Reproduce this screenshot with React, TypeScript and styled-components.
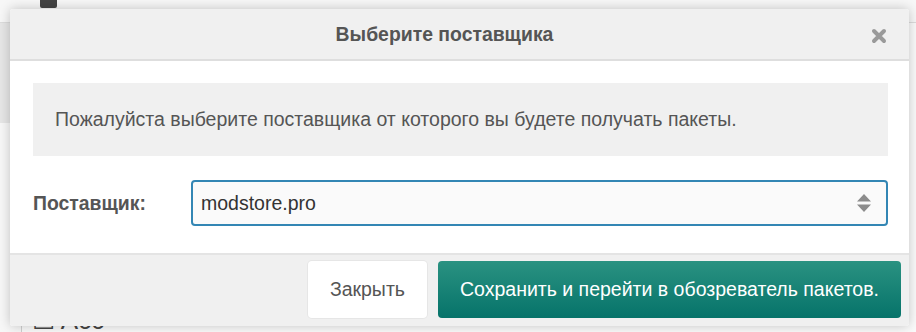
import React from 'react';
import styled, { createGlobalStyle } from 'styled-components';

const GlobalStyle = createGlobalStyle`
  html, body {
    margin: 0;
    padding: 0;
    background: #f4f4f4;
    font-family: "Liberation Sans", Arial, sans-serif;
  }
`;

const Page = styled.div`
  position: relative;
  width: 916px;
  height: 332px;
  overflow: hidden;
  background: #f4f4f4;
`;

const Backdrop = styled.div`
  display: grid;
  grid-template-columns: 22px 1fr;
  grid-template-rows: 23px 1fr;
  height: 100%;
`;

const TopBar = styled.div`
  grid-column: 1 / 3;
  background: #f7f7f7;
  border-bottom: 1px solid #dcdcdc;
  display: flex;
  align-items: flex-start;
  padding-left: 40px;
  gap: 44px;
`;

const TopIcon = styled.div`
  width: 17px;
  height: 8px;
  background: #444;
  border-radius: 0 0 2px 2px;
`;

const SideStrip = styled.div`
  background: linear-gradient(#e6e6e6 0, #e6e6e6 100px, #f7f7f7 100px);
  border-right: 1px solid #d0d0d0;
`;

const Content = styled.div`
  background: #fafafa;
  display: flex;
  flex-direction: column;
  justify-content: flex-end;
  padding: 0 0 2px 10px;
`;

const BgLabel = styled.div`
  font-size: 26px;
  color: #444;
  line-height: 20px;
`;

const Window = styled.div`
  position: absolute;
  left: 10px;
  top: 9px;
  width: 899px;
  height: 317px;
  display: flex;
  flex-direction: column;
  background: #fff;
  border-radius: 3px;
  box-shadow: 0 0 12px rgba(0, 0, 0, 0.22);
  overflow: hidden;
`;

const Header = styled.div`
  height: 50px;
  flex: none;
  background: #f0f0f0;
  border-bottom: 2px solid #dedede;
  display: flex;
  align-items: center;
  justify-content: center;
  position: relative;
  padding-right: 30px;
`;

const Title = styled.div`
  font-size: 19.4px;
  font-weight: bold;
  color: #555;
`;

const CloseButton = styled.button`
  position: absolute;
  right: 22px;
  top: 19px;
  width: 16px;
  height: 16px;
  padding: 0;
  border: 0;
  background: none;
  cursor: pointer;
  display: flex;
`;

const Body = styled.div`
  flex: 1;
  padding: 22px 21px 0 23px;
  display: flex;
  flex-direction: column;
`;

const Info = styled.div`
  height: 73px;
  background: #f0f0f0;
  display: flex;
  align-items: center;
  padding-left: 22px;
  font-size: 19.5px;
  color: #555;
`;

const FormRow = styled.div`
  display: flex;
  align-items: center;
  margin-top: 24px;
`;

const Label = styled.label`
  width: 158px;
  font-size: 19.4px;
  font-weight: bold;
  color: #555;
`;

const Select = styled.div`
  flex: 1;
  height: 42px;
  border: 2px solid #3386b4;
  border-radius: 4px;
  background: #fafafa;
  display: flex;
  align-items: center;
  padding: 0 14px 0 8px;
  font-size: 19.5px;
  color: #333;
`;

const SelectValue = styled.span`
  flex: 1;
`;

const Footer = styled.div`
  height: 73px;
  flex: none;
  background: #f0f0f0;
  border-top: 2px solid #e4e4e4;
  display: flex;
  justify-content: flex-end;
  align-items: flex-start;
  gap: 11px;
  padding: 6px 8px 0 0;
  box-sizing: border-box;
`;

const Button = styled.button<{ primary?: boolean }>`
  height: 57px;
  padding: 0 22px;
  border: 0;
  border-radius: 4px;
  font-family: inherit;
  font-size: 19.5px;
  cursor: pointer;
  color: ${({ primary }) => (primary ? '#fff' : '#555')};
  background: ${({ primary }) => (primary
    ? 'linear-gradient(#2a9281, #06736a)'
    : '#fff')};
  box-shadow: ${({ primary }) => (primary ? 'none' : '0 0 0 1px #e6e6e6')};
`;

export default function App(): JSX.Element {
  return (
    <Page>
      <GlobalStyle />
      <Backdrop>
        <TopBar>
          <TopIcon />
        </TopBar>
        <SideStrip />
        <Content>
          <BgLabel>☐ Acc</BgLabel>
        </Content>
      </Backdrop>
      <Window>
        <Header>
          <Title>Выберите поставщика</Title>
          <CloseButton aria-label='close'>
            <svg width='16' height='16' viewBox='0 0 16 16'>
              <path d='M3 3 L13 13 M13 3 L3 13' stroke='#9a9a9a' strokeWidth='4' strokeLinecap='round' />
            </svg>
          </CloseButton>
        </Header>
        <Body>
          <Info>Пожалуйста выберите поставщика от которого вы будете получать пакеты.</Info>
          <FormRow>
            <Label>Поставщик:</Label>
            <Select>
              <SelectValue>modstore.pro</SelectValue>
              <svg width='16' height='22' viewBox='0 0 16 22'>
                <path d='M8 2 L15 9.5 L1 9.5 Z M1 12.5 L15 12.5 L8 20 Z' fill='#8c8c8c' />
              </svg>
            </Select>
          </FormRow>
        </Body>
        <Footer>
          <Button>Закрыть</Button>
          <Button primary>Сохранить и перейти в обозреватель пакетов.</Button>
        </Footer>
      </Window>
    </Page>
  );
}
